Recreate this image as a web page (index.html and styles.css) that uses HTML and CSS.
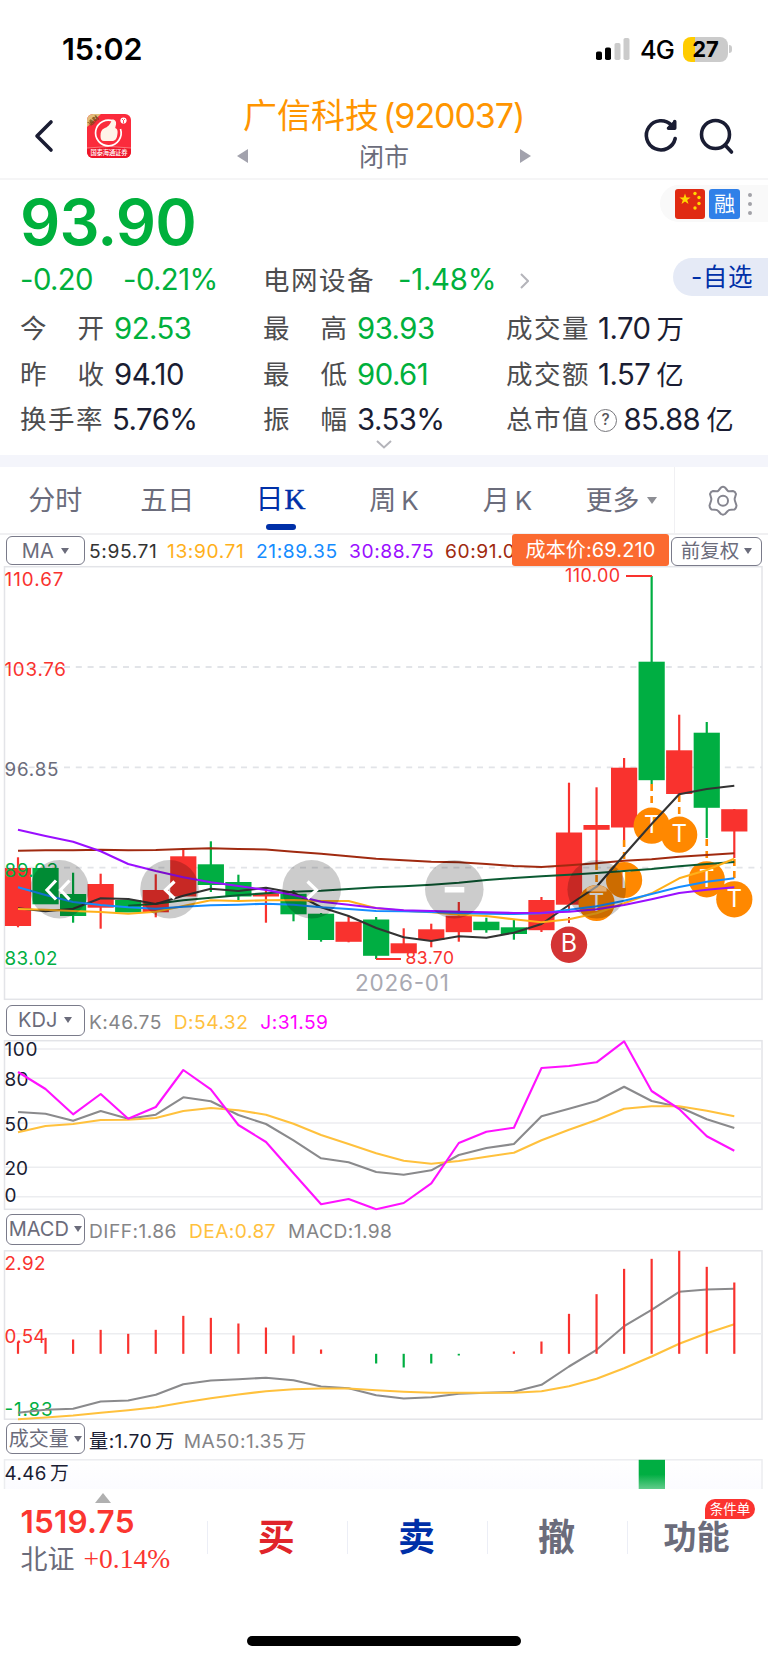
FILE: index.html
```html
<!DOCTYPE html>
<html lang="zh-CN">
<head>
<meta charset="utf-8">
<title>广信科技 (920037)</title>
<link rel="stylesheet" href="styles.css">
</head>
<body>
<div class="status">
  <span class="clock">15:02</span>
  <div class="status-right">
    <svg class="signal" width="34" height="22" viewBox="0 0 34 22"><rect x="0" y="13.500" width="6" height="8.500" rx="1.800"/><rect x="9" y="9.500" width="6" height="12.500" rx="1.800"/><rect class="off" x="18.500" y="5" width="6" height="17" rx="1.800"/><rect class="off" x="27.500" y="0" width="6" height="22" rx="1.800"/></svg>
    <span class="net">4G</span>
    <span class="battery">27</span><i class="nub"></i>
  </div>
</div>
<header class="head">
  <div class="head-left">
    <svg width="20" height="34" viewBox="0 0 20 34" class="stroke-icon"><path d="M17 3 3 17 17 31"/></svg>
    <svg class="logo" width="44" height="44" viewBox="0 0 44 44">
      <defs><clipPath id="lc"><rect width="44" height="44" rx="6"/></clipPath></defs>
      <g clip-path="url(#lc)">
        <rect width="44" height="44" fill="#fb2b3c"/>
        <path d="M0 34Q22 31 44 34V44H0Z" fill="#ee1529"/>
        <path d="M0 34Q22 31 44 34" fill="none" stroke="#ff8f90" stroke-width=".8"/>
        <path d="M0 0H14L0 13Z" fill="#e3bd7c"/>
        <text x="1" y="10" transform="rotate(-42 5 8)" class="logo-tag">通财</text>
        <path d="M27 7.500A12.800 12.800 0 1 0 33.500 15" fill="none" stroke="#fff" stroke-width="1.700"/>
        <path d="M25 5.500c3-.5 4.500 2 4 5l-.8 3.500c2.600 1 2.800 3.500 2 7.500-.7 4-2.200 5.500-5.500 5.500H17c-2.500 0-3.500-1.700-3.500-5 0-4 1-6.500 3.500-7.500 4-1.700 6-3.500 8-9Z" fill="#fff4e9"/>
        <circle cx="36.500" cy="6.500" r="3.100" fill="#fff"/><path d="M35 5l1.500 1.500L38 5M36.500 6.500V9" stroke="#f23" fill="none" stroke-width=".8"/>
        <text x="3.500" y="41" class="logo-name" textLength="37">国泰海通证券</text>
      </g>
    </svg>
  </div>
  <div class="head-mid">
    <h1>广信科技<b>(920037)</b></h1>
    <div class="session"><i class="tri left"></i><span>闭市</span><i class="tri right"></i></div>
  </div>
  <div class="head-right">
    <svg width="36" height="38" viewBox="0 0 36 38" class="stroke-icon"><path d="M32.200 21.500A14.600 14.600 0 1 1 28.500 8.200"/><path d="M31.700 4.500V11.300H25.500"/><path d="M26.500 10.300 30.500 6.500V11.200Z"/></svg>
    <svg width="36" height="38" viewBox="0 0 36 38" class="stroke-icon"><circle cx="16.500" cy="17.500" r="14"/><path d="M26 28 32.500 35"/></svg>
  </div>
</header>

<section class="quote">
  <div class="q-top">
    <div class="price">93.90</div>
    <div class="tags">
      <svg width="30" height="30" viewBox="0 0 30 30"><rect width="30" height="30" rx="3" fill="#e02a12"/><g fill="#ffd800"><path d="M10 4.500l1.400 4h4.200l-3.400 2.500 1.300 4-3.500-2.500-3.500 2.500 1.300-4L4.400 8.500h4.200z"/><circle cx="20" cy="4.500" r="1.700"/><circle cx="24" cy="8.500" r="1.700"/><circle cx="24" cy="14.500" r="1.700"/><circle cx="20" cy="19" r="1.700"/></g></svg>
      <span class="rong">融</span>
      <span class="dots"><i></i><i></i><i></i></span>
    </div>
  </div>
  <div class="q-row q-change">
    <div class="c1 dn"><span>-0.20</span><span class="pct">-0.21%</span></div>
    <div class="c2"><span class="k">电网设备</span><span class="dn sector">-1.48%</span>
      <svg width="9" height="16" viewBox="0 0 9 16"><path d="M1 1l7 7-7 7" fill="none" stroke="#b4b4ba" stroke-width="2"/></svg></div>
    <div class="fav">-自选</div>
  </div>
  <div class="q-row"><div class="c1"><span class="k two"><u>今</u><u>开</u></span><span class="dn">92.53</span></div><div class="c2"><span class="k two"><u>最</u><u>高</u></span><span class="dn">93.93</span></div><div class="c3"><span class="k">成交量</span><span>1.70<em>万</em></span></div></div>
  <div class="q-row"><div class="c1"><span class="k two"><u>昨</u><u>收</u></span><span>94.10</span></div><div class="c2"><span class="k two"><u>最</u><u>低</u></span><span class="dn">90.61</span></div><div class="c3"><span class="k">成交额</span><span>1.57<em>亿</em></span></div></div>
  <div class="q-row"><div class="c1"><span class="k">换手率</span><span class="turn">5.76%</span></div><div class="c2"><span class="k two"><u>振</u><u>幅</u></span><span>3.53%</span></div><div class="c3"><span class="k">总市值</span><span class="help">?</span><span>85.88<em>亿</em></span></div></div>
  <svg class="more" width="16" height="9" viewBox="0 0 16 9"><path d="M1 1l7 6.500L15 1" fill="none" stroke="#b4b4ba" stroke-width="2"/></svg>
</section>

<nav class="tabs">
  <span>分时</span><span>五日</span><span class="on">日<b>K</b></span><span>周<s>K</s></span><span>月<s>K</s></span><span class="last">更多<i class="caret"></i></span>
  <div class="gear"><svg width="32" height="32" viewBox="0 0 32 32" fill="none" stroke="#85858f" stroke-width="2" stroke-linejoin="round"><path d="M14 2.500Q16 1.200 18 2.500L20.500 5.500Q21.500 6.600 23 6.300L26 6Q28.300 6.500 29 9L28 12.500Q27.300 14 28 16L29.500 20.500Q29.500 23 27.500 24.500L23.500 24.700Q21.800 24.700 20.800 26L18 29Q16 30.300 14 29L11.200 26Q10.200 24.700 8.500 24.700L4.500 24.500Q2.500 23 2.500 20.500L4 16Q4.700 14 4 12.500L3 9Q3.700 6.500 6 6L9 6.300Q10.500 6.600 11.500 5.500Z"/><circle cx="16" cy="15.800" r="5"/></svg></div>
</nav>

<div class="ind ma">
  <span class="pick">MA<i class="caret"></i></span>
  <div class="vals"><span class="m5">5:95.71</span><span class="m13">13:90.71</span><span class="m21">21:89.35</span><span class="m30">30:88.75</span><span class="m60">60:91.0</span></div>
  <span class="cost">成本价:69.210</span>
  <span class="pick adj">前复权<i class="caret"></i></span>
</div>
<svg class="chart" id="kline" width="768" height="434" viewBox="0 566 768 434"></svg>
<div class="ind kdj"><span class="pick">KDJ<i class="caret"></i></span><div class="vals"><span class="g">K:46.75</span><span class="y">D:54.32</span><span class="p">J:31.59</span></div></div>
<svg class="chart" id="kdj" width="768" height="170" viewBox="0 1040 768 170"></svg>
<div class="ind macd"><span class="pick">MACD<i class="caret"></i></span><div class="vals"><span class="g">DIFF:1.86</span><span class="y">DEA:0.87</span><span class="g">MACD:1.98</span></div></div>
<svg class="chart" id="macd" width="768" height="170" viewBox="0 1249.500 768 170"></svg>
<div class="ind vol"><span class="pick">成交量<i class="caret"></i></span><div class="vals"><span class="n">量:1.70<em>万</em></span><span class="g">MA50:1.35<em>万</em></span></div></div>
<svg class="chart vol-chart" id="vol" width="768" height="30" viewBox="0 1458.500 768 30"></svg>

<footer class="bar">
  <div class="index"><i class="up"></i><b>1519.75</b><div><span>北证</span><em>+0.14%</em></div></div>
  <div class="act buy">买</div><div class="act sell">卖</div><div class="act">撤</div><div class="act fn">功能<span class="badge">条件单</span></div>
</footer>
<div class="home"></div>
<script src="charts.js"></script>
</body>
</html>
```
FILE: styles.css
```css
* { box-sizing: border-box; }
body { margin: 0; width: 768px; height: 1663px; overflow: hidden; background: #fff; color: #1a1d33; font-family: Inter, "Noto Sans CJK SC", sans-serif; display: flex; flex-direction: column; }
body > * { flex: none; }
em, i { font-style: normal; }
u, s { text-decoration: none; }
.status { height: 98px; padding: 0 36px 0 62px; display: flex; justify-content: space-between; align-items: center; color: #000; }
.clock { font-size: 30.5px; font-weight: 600; letter-spacing: -0.1px; margin-top: -1px; }
.status-right { display: flex; align-items: center; }
.signal .off { fill: #cbcbcb; }
.net { font-size: 25.5px; font-weight: 500; letter-spacing: -1px; margin-left: 10.500px; width: 43px; }
.battery { width: 45px; height: 25px; border-radius: 8px; background: linear-gradient(90deg, #fc0 12px, #cbcbcb 12px); font-size: 22px; font-weight: 700; line-height: 25px; text-align: center; letter-spacing: -0.2px; }
.nub { width: 3px; height: 8px; border-radius: 0 4px 4px 0; background: #cbcbcb; margin-left: 1px; }
.head { height: 82px; border-bottom: 2px solid #f5f5f6; display: flex; position: relative; }
.head-left { width: 243px; padding: 16px 0 0 34px; display: flex; gap: 33px; align-items: flex-start; }
.head-left > svg:first-child { margin-top: 5px; }
.stroke-icon { fill: none; stroke: #1a1d33; stroke-width: 3.6; stroke-linecap: round; stroke-linejoin: round; }
.logo-tag { font: 700 6px "Noto Sans CJK SC", sans-serif; fill: #7b4c16; }
.logo-name { font: 500 6.3px "Noto Sans CJK SC", sans-serif; fill: #fff; }
.head-mid { width: 282px; }
h1 { margin: 0; font-size: 34px; line-height: 36px; font-weight: 400; color: #ff9500; white-space: nowrap; }
h1 b { font-weight: 400; font-size: 34px; letter-spacing: -1.05px; margin-left: 4px; }
.session { display: flex; justify-content: space-between; align-items: center; height: 36px; margin: 3px -6px 0 -6px; font-size: 25px; color: #6b6c7b; }
.session .tri { margin-top: 1px; }
.tri { border: 7px solid transparent; border-width: 7px 0; }
.tri.left { border-right: 11.5px solid #a2a2ad; }
.tri.right { border-left: 11.5px solid #a2a2ad; }
.head-right { flex: 1; display: flex; padding: 19px 0 0 118px; gap: 20px; }
.quote { height: 275px; padding-left: 20px; position: relative; }
.q-top { display: flex; justify-content: space-between; height: 77px; }
.price { font-size: 63px; line-height: 85px; font-weight: 600; letter-spacing: -.9px; color: #00b03c; }
.dn { color: #00b03c; }
.tags { width: 108px; height: 37px; margin-top: 5px; background: #f9f9f9; border-radius: 19px 0 0 19px; padding-left: 15px; display: flex; align-items: center; gap: 4px; }
.rong { width: 31px; height: 30px; border-radius: 3px; background: #3080e8; color: #fff; font-size: 21px; line-height: 29px; text-align: center; }
.dots { display: flex; flex-direction: column; gap: 5px; margin-left: 4px; }
.dots i { width: 4px; height: 4px; border-radius: 2px; background: #a2a2a8; }
.q-row { display: flex; height: 45.500px; line-height: 45.500px; font-size: 29.300px; letter-spacing: -.5px; white-space: nowrap; }
.q-change { height: 49px; line-height: 46px; }
.c1 { width: 243px; } .c2 { width: 243px; } .c3 { flex: 1; }
.q-row > div { display: flex; }
.k { color: #4d4d4f; font-size: 26.500px; letter-spacing: 1.5px; width: 92px; }
.q-change .k { width: 134px; }
.two { width: 94px; padding-right: 10px; display: flex; justify-content: space-between; }
.two u { letter-spacing: 0; }
.pct { margin-left: 30px; }
.q-change { letter-spacing: -.25px; }
.q-change .c1 { letter-spacing: -.6px; }
.q-change .k { flex: none; }
.q-change .c2 { width: 300px; }
.q-change svg { margin: 16px 0 0 24px; }
.q-row em { margin-left: 6px; font-size: 27.500px; }
.sector { margin-left: 1px; }
.fav { margin: 1px 0 0 auto; width: 95px; height: 38px; border-radius: 19px 0 0 19px; background: #e5eaf6; color: #0030a8; font-size: 24.500px; line-height: 39px; letter-spacing: .6px; padding-left: 18px; }
.help { width: 23px; height: 23px; margin: 11.500px 6.500px 0 -4px; border: 1.5px solid #77777c; border-radius: 50%; font-size: 15.500px; line-height: 20px; text-align: center; color: #55555a; letter-spacing: 0; font-weight: 500; flex: none; }
.more { position: absolute; left: 376px; bottom: 6px; }
.tabs { height: 80px; border-top: 12px solid #f4f5fb; border-bottom: 2px solid #f0f0f2; display: flex; align-items: stretch; font-size: 27px; color: #6b6c7b; line-height: 67.500px; position: relative; }
.tabs > span { width: 113.400px; text-align: center; white-space: nowrap; }
.tabs > span:first-child { width: 110.500px; }
.tabs .on { color: #0030a8; font-size: 28px; position: relative; line-height: 65px; }
.on b { font: 400 29px "Liberation Serif", serif; -webkit-text-stroke: .5px #0030a8; margin-left: 1px; }
.on::after { content: ""; position: absolute; left: 42px; top: 56.500px; width: 30px; height: 6px; border-radius: 3px; background: #0030a8; }
.tabs s { margin-left: 5px; font-size: 26px; }
.tabs .last { width: 109.500px; text-align: left; padding-left: 21.500px; }
.caret { display: inline-block; border: 4px solid transparent; border-top: 6px solid #6b6c7b; border-bottom: 0; margin-left: 6px; vertical-align: middle; }
.tabs .caret { border-width: 5px 5px 0; border-top: 7px solid #8d8e94; margin: -4px 0 0 7px; }
.gear { flex: 1; border-left: 1.500px solid #f0f0f3; display: flex; align-items: center; justify-content: center; }
.gear svg { margin: 1px 0 0 3px; }
.ind { display: flex; padding-left: 6px; position: relative; height: 41px; }
.ma { height: 31px; padding-top: 1px; }
.pick { width: 78.500px; height: 29px; border: 1.600px solid #7a7b8a; border-radius: 6px; flex: none; color: #6b6c7b; font-size: 20px; line-height: 26px; display: flex; align-items: center; justify-content: center; white-space: nowrap; }
.pick .caret { margin-left: 7px; }
.adj { position: absolute; left: 671px; top: 1.500px; width: 91px; font-size: 19.500px; }
.adj .caret, .vol .caret, .macd .caret { margin-left: 5px; }
.cost { position: absolute; left: 512px; top: -1px; width: 157px; height: 32px; background: #fb6a30; color: #fff; font-size: 20px; line-height: 32px; text-align: center; border-radius: 3px; letter-spacing: .1px; }
.vals { display: flex; font-size: 19.200px; padding-left: 4.500px; line-height: 29px; letter-spacing: .45px; white-space: nowrap; overflow: hidden; }
.ma .vals { width: 427.500px; letter-spacing: .6px; line-height: 30px; }
.ma .vals span { flex: none; }
.m5 { width: 78px; color: #333; } .m13 { width: 89px; color: #ffb01a; } .m21 { width: 93px; color: #158cff; } .m30 { width: 96px; color: #9a0fff; } .m60 { color: #a02a10; }
.kdj { padding-top: 4.500px; height: 40px; }
.macd { padding-top: 3.500px; height: 39.500px; }
.vol { padding-top: 3.500px; height: 39px; }
.kdj .pick, .macd .pick, .vol .pick { height: 31px; }
.kdj .vals, .macd .vals, .vol .vals { line-height: 35px; gap: 12px; }
.vol .vals { line-height: 36px; }
.vals .g { color: #858587; } .vals .y { color: #ffc13d; } .vals .p { color: #f0f; } .vals .n { color: #1a1d33; }
.vals em { margin-left: 3px; }
.vol .vals { gap: 9px; }
.chart { display: block; overflow: visible; }
.vol-chart { overflow: hidden; }
.chart text { font-family: Inter, "Noto Sans CJK SC", sans-serif; }
.bar { height: 110px; display: flex; position: relative; }
.index { width: 208px; padding: 16px 0 0 20.500px; position: relative; border-image: linear-gradient(transparent 32px, #eceef6 32px, #eceef6 65px, transparent 65px) 1; border-right: 1.500px solid; }
.index b { display: block; font-size: 31.500px; line-height: 33px; font-weight: 600; letter-spacing: .2px; color: #fb3630; }
.index .up { position: absolute; left: 95px; top: 4px; border: 8px solid transparent; border-top: 0; border-bottom: 10px solid #b0b0b0; }
.index div { font-size: 27px; line-height: 43px; color: #6b6c7b; display: flex; }
.index em { font: 27.500px/41px "Liberation Serif", serif; color: #fb3630; margin-left: 9px; }
.act { width: 140.200px; text-align: center; font-size: 37px; font-weight: 700; line-height: 97px; color: #6b6c7b; border-right: 1.500px solid; border-image: linear-gradient(transparent 32px, #eceef6 32px, #eceef6 65px, transparent 65px) 1; padding-right: 2px; }
.buy { color: #e0242a; } .sell { color: #0030a8; }
.fn { border: 0; font-size: 33px; position: relative; padding-right: 3px; }
.badge { position: absolute; left: 77px; top: 10px; width: 50px; height: 20px; border-radius: 10px 10px 10px 0; background: #fb3430; color: #fff; font-size: 13.500px; line-height: 20px; font-weight: 400; }
.home { width: 274px; height: 10px; border-radius: 5px; background: #000; margin: 37.500px 0 0 247px; }
```
FILE: charts.js
```js
(function () {
  var NS = "http://www.w3.org/2000/svg";
  var RED = "#f9322e", GREEN = "#00ae42", FRAME = "#e3e4e8";

  function add(svg, tag, attrs, text) {
    var el = document.createElementNS(NS, tag);
    for (var k in attrs) el.setAttribute(k, attrs[k]);
    if (text) el.textContent = text;
    svg.appendChild(el);
    return el;
  }
  function x(i) { return 18 + i * 27.55; }
  function seg(svg, x1, y1, x2, y2, color, w, dash) {
    add(svg, "line", { x1: x1, y1: y1, x2: x2, y2: y2, stroke: color, "stroke-width": w || 1.5, "stroke-dasharray": dash || "none" });
  }
  function curve(svg, ys, color, start, map) {
    var p = ys.map(function (y, i) { return x(i + (start || 0)).toFixed(1) + "," + (map ? map(y) : y).toFixed(1); });
    add(svg, "polyline", { points: p.join(" "), fill: "none", stroke: color, "stroke-width": 2.1, "stroke-linejoin": "round" });
  }
  function label(svg, px, py, text, color, size, width) {
    var a = { x: px, y: py, fill: color, "font-size": size };
    if (width) a.textLength = width;
    add(svg, "text", a, text);
  }
  function frame(svg, top, bottom) {
    add(svg, "rect", { x: 4.500, y: top, width: 757.500, height: bottom - top, fill: "none", stroke: FRAME, "stroke-width": 1.5 });
  }

  // candlesticks: [colour, body top, body bottom, wick top, wick bottom]
  var k = document.getElementById("kline");
  frame(k, 566.700, 999.300);
  seg(k, 4.500, 968.300, 762, 968.300, FRAME);
  [667, 767.300, 867.700].forEach(function (y) { seg(k, 5, y, 762, y, "#e2e4e8", 1.8, "6 5.8"); });
  var candles = [
    ["r", 868, 926, 857.3, 927.3], ["g", 868, 904.3, 868, 904], ["g", 894, 916, 872.7, 922.7], ["r", 884, 907.7, 873.7, 928.7],
    ["g", 900, 912.5, 898, 912], ["r", 890, 912.3, 874.3, 917.3], ["r", 856.3, 896.5, 849.3, 896], ["g", 864.3, 885, 841.3, 892],
    ["g", 882, 896.5, 874.7, 900], ["r", 893.7, 896.5, 888, 922.7], ["g", 893.7, 914.3, 890, 921.3], ["g", 913.7, 940, 913, 941.7],
    ["r", 921.7, 941.8, 916, 942.3], ["g", 919.5, 955.8, 917, 959], ["r", 943.3, 953.3, 928.3, 953], ["r", 929.3, 940, 923.7, 947.3],
    ["r", 915.7, 932.2, 902, 941.7], ["g", 921.7, 930.2, 917.7, 932.7], ["g", 927.3, 934, 920, 939.7], ["r", 900, 930.2, 897, 932],
    ["r", 832.5, 904.7, 782.7, 904], ["r", 825, 829.8, 787.3, 863], ["r", 767.7, 827.5, 758, 840], ["g", 661.7, 780.2, 576, 784],
    ["r", 750.3, 794, 714.7, 794], ["g", 732.7, 807.8, 722, 838], ["r", 809.2, 831.5, 809, 858]
  ];
  label(k, 4.500, 586, "110.67", RED, 18.8, 59);
  label(k, 4.500, 676, "103.76", RED, 18.8, 61.5);
  label(k, 4.500, 776, "96.85", "#6b6c7b", 18.8, 54);
  candles.forEach(function (c, i) {
    var col = c[0] === "r" ? RED : GREEN;
    seg(k, x(i), c[3], x(i), c[4], col, 2.2);
    add(k, "rect", { x: x(i) - 13.100, y: c[1], width: 26.200, height: c[2] - c[1], fill: col });
  });
  label(k, 4.500, 877, "89.93", GREEN, 18.8, 53.5);
  label(k, 4.500, 965.300, "83.02", GREEN, 18.8, 53);
  label(k, 565, 582, "110.00", RED, 18, 55);
  seg(k, 626, 576, 652, 576, RED, 2);
  seg(k, 376, 959, 401, 959, RED, 2);
  label(k, 405.500, 964, "83.70", RED, 17.5, 48.5);
  label(k, 355, 991, "2026-01", "#a9a9b2", 22.5, 94);

  // trade markers hanging from their candle by a dashed stem
  seg(k, x(20), 906, x(20), 930, "#d43434", 2, "6 5");
  [[21, 863, 903], [22, 840, 880], [23, 784, 825.7], [24, 795, 834.7], [25, 839, 879.3], [26, 859, 899.3]].forEach(function (m) {
    seg(k, x(m[0]), m[1], x(m[0]), m[2] - 18, "#ff8800", 2.6, "7 5");
    add(k, "circle", { cx: x(m[0]), cy: m[2], r: 18.100, fill: "#ff8800" });
    add(k, "text", { x: x(m[0]), y: m[2] + 7.5, fill: "#fff", "font-size": 24, "font-weight": 400, "text-anchor": "middle" }, "T");
  });
  add(k, "circle", { cx: x(20), cy: 944.700, r: 18.200, fill: "#d43434" });
  add(k, "text", { x: x(20), y: 952.300, fill: "#fff", "font-size": 25, "text-anchor": "middle" }, "B");

  curve(k, [850.7, 850.3, 850.2, 849.8, 850.3, 850, 849, 848.3, 849, 849.5, 851.7, 853.7, 856.3, 858.7, 860.3, 861.7, 862.3, 864, 866, 867, 865.3, 863.3, 860.7, 859.3, 856.7, 855, 853.3], "#a02a10");
  curve(k, [905.7, 903.7, 900.3, 897.7, 895.3, 893.3, 891.7, 890.7, 889, 887.3, 886.3, 884.7, 882.7, 880, 878, 876.3, 874.7, 873, 871, 869, 866.3, 864, 862], "#0b5a32", 4);
  curve(k, [908.3, 911.3, 908.7, 898.3, 899, 904, 895.7, 888.7, 891, 887.7, 892.7, 907.3, 916, 928, 937.3, 941, 936.3, 937.7, 932.7, 924, 905, 886.7, 855, 824, 794.3, 789, 785.7], "#333");
  curve(k, [909, 909.7, 911, 912, 913.7, 911.7, 906, 900.3, 901, 900.3, 900, 901, 901, 908.3, 910.7, 912.3, 914.7, 916, 919.3, 922.3, 919.3, 913.3, 903.3, 893.3, 878.3, 870, 858.7], "#ffb01a");
  curve(k, [887.3, 895, 902, 905, 907.3, 908.7, 906.7, 905.3, 904.7, 903.7, 904.7, 907.3, 909, 911, 911.3, 912, 913, 913.7, 914, 913.3, 909.7, 906.3, 900.7, 894, 887, 881.7, 878.3], "#158cff");
  curve(k, [829.7, 836, 841.7, 851.3, 864, 871, 877.3, 882.3, 886, 890, 895, 901.7, 904.7, 908, 910.3, 911, 911.7, 912.3, 913, 912.7, 911.7, 909.3, 905, 899.3, 893, 889.7, 887.3], "#9a0fff");

  // translucent scroll and zoom buttons over the plot
  [59.500, 169.500, 311.700, 454.300, 596.700].forEach(function (cx) {
    add(k, "circle", { cx: cx, cy: 889.300, r: 29.300, fill: "#000", "fill-opacity": 0.2 });
  });
  ["M56 880.500 47 890 56 899.500M69.500 880.500 60.500 890 69.500 899.500", "M174.500 881.500 165.500 890 174.500 898.500", "M307.500 881.500 316.500 890 307.500 898.500"].forEach(function (d) {
    add(k, "path", { d: d, fill: "none", stroke: "#fff", "stroke-width": 3.2 });
  });
  add(k, "rect", { x: 444.700, y: 887, width: 19.600, height: 5.500, fill: "#fff" });
  add(k, "path", { d: "M586.500 888Q597 882 606.500 888V891.500H586.500Z", fill: "#fff", "fill-opacity": 0.45 });

  var d = document.getElementById("kdj");
  function third(base) { return function (v) { return base + v / 3; }; }
  frame(d, 1040.700, 1209.300);
  [1049, 1078.300, 1123, 1167.300, 1196.700].forEach(function (y) { seg(d, 5, y, 762, y, "#ecedf0"); });
  [["100", 1056, 33], ["80", 1085.7, 24], ["50", 1130.7, 24], ["20", 1174.5, 23.5], ["0", 1202, 11]].forEach(function (t) { label(d, 4.500, t[1], t[0], "#1a1d33", 19, t[2]); });
  curve(d, [336, 341, 362, 333, 356, 344, 292, 304, 345, 372, 421, 475, 487, 516, 524, 511, 465, 444, 432, 349, 326, 303, 260, 303, 321, 358, 384], "#8a8a8c", 0, third(1000));
  curve(d, [397, 378, 372, 360, 359, 354, 333, 324, 331, 344, 371, 405, 432, 460, 482, 491, 483, 470, 458, 421, 389, 360, 326, 319, 319, 332, 349], "#ffc13d", 0, third(1000));
  curve(d, [216, 267, 343, 282, 356, 321, 210, 268, 375, 426, 520, 613, 597, 628, 609, 550, 429, 395, 383, 204, 198, 187, 124, 273, 327, 409, 452], "#ff12ff", 0, third(1000));

  var m = document.getElementById("macd");
  frame(m, 1250.300, 1418.700);
  seg(m, 5, 1333.300, 762, 1333.300, "#ecedf0");
  label(m, 4.500, 1269.500, "2.92", RED, 18.8, 41);
  label(m, 4.500, 1342.500, "0.54", RED, 18.8, 41);
  label(m, 4.500, 1415.500, "-1.83", GREEN, 18.8, 48);
  curve(m, [577, 568, 565, 543, 540, 523, 491, 480, 476, 472, 479, 498, 503, 524, 534, 530, 520, 517, 514, 493, 438, 388, 317, 268, 214, 207, 205], "#8a8a8c", 0, third(1220));
  curve(m, [596, 591, 585, 577, 569, 560, 546, 533, 522, 512, 506, 504, 504, 509, 514, 517, 517, 517, 517, 512, 497, 475, 443, 408, 370, 338, 311], "#ffc13d", 0, third(1220));
  [364, 352, 357, 328, 340, 328, 286, 292, 309, 321, 345, 387, 0, 429, 441, 429, 405, 0, 393, 363, 280, 221, 145, 115, 91, 139, 186].forEach(function (v, i) {
    if (v) seg(m, x(i), 1220 + v / 3, x(i), 1353.300, v < 399 ? RED : GREEN, 2.2);
  });

  var v = document.getElementById("vol");
  var defs = add(v, "defs", {});
  [["fade", "#ffffff", "#fafaff"], ["bar", "#00ae42", "#61cc8b"]].forEach(function (g) {
    var lg = add(defs, "linearGradient", { id: g[0], x1: 0, y1: 0, x2: 0, y2: 1 });
    add(lg, "stop", { offset: g[0] === "bar" ? 0.5 : 0, "stop-color": g[1] });
    add(lg, "stop", { offset: 1, "stop-color": g[2] });
  });
  add(v, "rect", { x: 4.500, y: 1459.300, width: 757.500, height: 40, fill: "url(#fade)", stroke: "#ecedf0", "stroke-width": 1.5 });
  add(v, "rect", { x: 638.700, y: 1459.300, width: 26.300, height: 29.200, fill: "url(#bar)" });
  label(v, 4.500, 1479, "4.46", "#1a1d33", 18.8, 42);
  label(v, 50, 1479, "万", "#1a1d33", 18.8);
})();
```
